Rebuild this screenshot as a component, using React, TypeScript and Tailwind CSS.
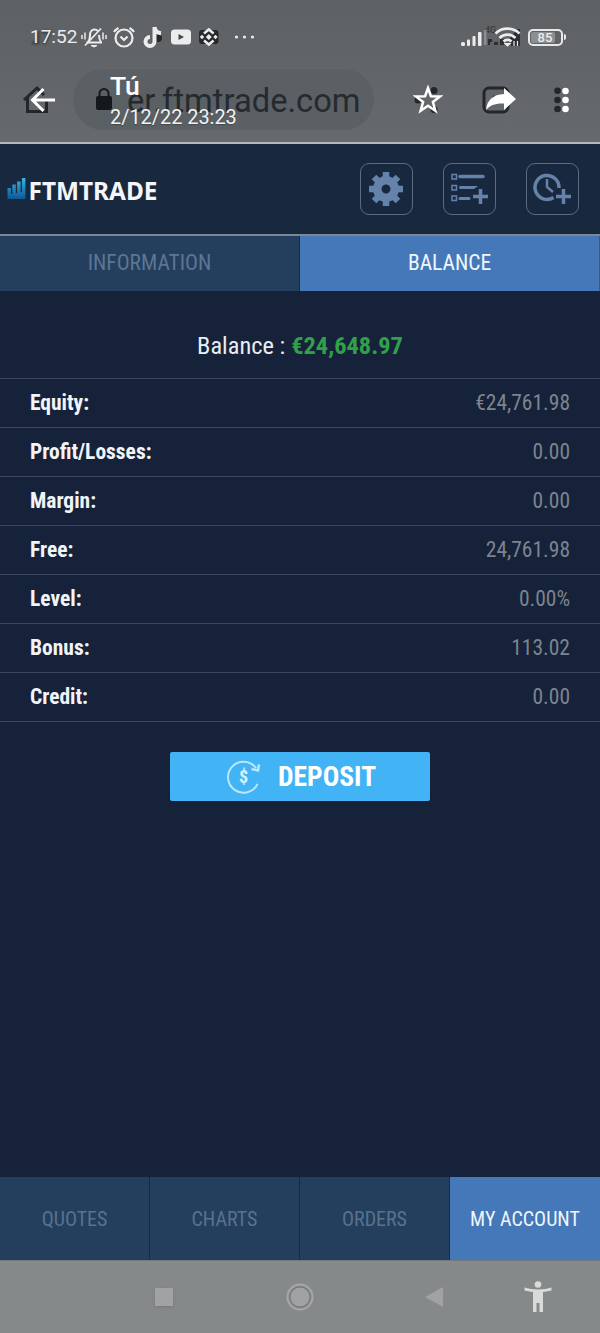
import type { ReactNode } from 'react'

const rows = [
  { label: 'Equity:', value: '€24,761.98' },
  { label: 'Profit/Losses:', value: '0.00' },
  { label: 'Margin:', value: '0.00' },
  { label: 'Free:', value: '24,761.98' },
  { label: 'Level:', value: '0.00%' },
  { label: 'Bonus:', value: '113.02' },
  { label: 'Credit:', value: '0.00' },
]

const bottomTabs = ['QUOTES', 'CHARTS', 'ORDERS', 'MY ACCOUNT']

function StatusBar() {
  return (
    <div className="relative flex h-[74px] items-center pl-[30px] text-[#ececec]">
      {/* Dark status icons of the page underneath */}
      <svg className="absolute left-[30px] top-[29px] blur-[1px]" width="24" height="17" fill="none" stroke="#3c4043" strokeWidth="3">
        <path d="M2 14h6V2M12 3h8l-6 12" />
      </svg>
      <div className="absolute left-[485px] top-[25px] text-[9px] leading-[11px] text-[#303437]">4G</div>
      <svg className="absolute left-[484px] top-[28px]" width="38" height="19" fill="#2b2f32">
        <path d="M0 2h2.500v15H0z" fill="#8b8e90" />
        <path d="M4 11h4v3H6v3H4zM10 14h4v3h-4zM16 11h4v6h-4zM26 9l8-8h2v17h-9z" />
      </svg>

      <div className="relative w-[52px] whitespace-nowrap text-[19px] leading-6">17:52</div>

      {/* Muted, vibrating bell */}
      <svg className="-ml-px" width="26" height="24" viewBox="0 0 26 24" fill="none" stroke="currentColor" strokeWidth="2">
        <path d="M5.500 17.500h15.500M7 17c2-2 2-4 2-7 0-3 1.700-5.500 4.500-5.500 1.500 0 2.500.5 3.300 1.500M18 10c0 3 .4 5 2 7" />
        <path d="M10 20.500h6l-3 1.500z" fill="currentColor" strokeWidth="1" />
        <path d="M4 20.500 20 3.500" strokeWidth="1.800" />
        <path d="M1 10v4M4 7.500v7M22 7.500v7M25 10v4" strokeWidth="1.500" />
      </svg>
      <svg className="ml-[5px]" width="24" height="24" viewBox="0 0 24 24" fill="none" stroke="currentColor" strokeWidth="2.200">
        <circle cx="12" cy="13" r="8.500" />
        <path d="m8.500 11.500 3.500 3.500 3.500-3.500M2 7c1-2 2.500-3 4.500-4M22 7c-1-2-2.500-3-4.500-4" />
      </svg>
      <div className="relative ml-[7px] flex">
        <div className="absolute left-[11px] top-[9px] size-[8px] rounded-sm bg-[#25292c]" />
        <svg className="relative" width="20" height="24" viewBox="0 0 20 24" fill="none">
          <path d="M11.500 2v14.500a4.500 4.500 0 1 1-4.500-4.500M11.500 2c.4 4 2.500 6 6.500 6.200" stroke="currentColor" strokeWidth="4" />
        </svg>
      </div>
      <svg className="ml-[7px]" width="22" height="24" viewBox="0 0 22 24">
        <rect x="1" y="4.500" width="20" height="15" rx="3.500" fill="currentColor" />
        <path d="m8.500 9 5.500 3-5.500 3z" fill="#42474a" />
      </svg>
      <svg className="ml-[6px]" width="22" height="24" viewBox="0 0 22 24">
        <rect x="1" y="5" width="19.500" height="14" rx="3" fill="#25292c" />
        <path d="m6 8.500 4.800-4 4.800 4M6 15.500l4.800 4 4.800-4" fill="none" stroke="currentColor" strokeWidth="2.500" />
        <path d="m10.800 9 3 3-3 3-3-3zM4 9.800 6.200 12 4 14.200 1.800 12zM17.500 9.800l2.200 2.200-2.200 2.200-2.200-2.200z" fill="currentColor" />
      </svg>
      <svg className="ml-[13px]" width="22" height="24" viewBox="0 0 22 24" fill="currentColor">
        <circle cx="3.500" cy="12" r="1.600" />
        <circle cx="11.500" cy="12" r="1.600" />
        <circle cx="19.500" cy="12" r="1.600" />
      </svg>

      <div className="relative ml-auto mr-[34px] flex items-center">
        <svg width="23" height="24" viewBox="0 0 23 24" fill="currentColor">
          <rect x="1" y="17" width="4" height="4" rx="1.500" />
          <rect x="7" y="14.500" width="3" height="6.500" rx="1" />
          <rect x="12.500" y="11" width="3" height="10" rx="1" />
          <rect x="18" y="7" width="3.500" height="14" rx="1" />
        </svg>
        <svg className="ml-[11px]" width="27" height="24" viewBox="0 0 27 24" fill="none" stroke="currentColor" strokeWidth="2.600">
          <path d="M1.500 8.500c6.500-6.500 17.500-6.500 24 0M5.500 13c4.500-4.500 11.500-4.500 16 0M9.500 16.500c2.300-2.300 5.700-2.300 8 0" />
          <path d="m11 18.500 2.500 2.500 2.500-2.500zM20 16v5M23.500 16v5" fill="currentColor" strokeWidth="1.200" />
        </svg>
        <div className="ml-[7px] flex h-[17px] w-[35px] items-center rounded-[5px] border-2 border-[#e8e8e8] p-px">
          <div className="flex h-[11px] w-[24px] items-center justify-center rounded-[2px] bg-[#8c8f91] pl-[4px] text-[13px] font-medium leading-none">85</div>
        </div>
        <div className="ml-px h-[6px] w-[2px] rounded-r bg-[#e8e8e8]" />
      </div>
    </div>
  )
}

function ViewerBar() {
  return (
    <div className="relative flex h-[68px] items-start text-white">
      {/* Browser toolbar showing through */}
      <div className="absolute left-[73px] top-[-5px] h-[61px] w-[301px] rounded-full bg-[#5b6065]" />
      <svg className="absolute left-[22px] top-[10px]" width="30" height="32" viewBox="0 0 30 32" fill="none" stroke="#22272a" strokeWidth="3">
        <path d="M2 16 15 4l7 7M5.500 14v13.500h19V17" />
      </svg>
      <svg className="absolute left-[95px] top-[13px]" width="18" height="25" viewBox="0 0 18 25">
        <rect x="1" y="9" width="16" height="14" rx="2" fill="#14191c" />
        <path d="M4.500 10V6.500a4.500 4.500 0 0 1 9 0V10" fill="none" stroke="#14191c" strokeWidth="2" />
      </svg>
      <div className="absolute left-[127px] top-[7px] whitespace-nowrap text-[32.700px] leading-10 text-[#252a2e]">er.ftmtrade.com</div>
      <svg className="absolute left-[413px] top-[11px]" width="28" height="30" fill="#22272a">
        <circle cx="21" cy="5.500" r="3.500" />
        <circle cx="5" cy="15" r="3.500" />
        <circle cx="21" cy="24.500" r="3.500" />
      </svg>
      <svg className="absolute left-[482px] top-[12px]" width="28" height="28" fill="none" stroke="#22272a" strokeWidth="3">
        <rect x="2" y="2" width="24" height="24" rx="5" />
        <path d="m8 19 5-9" />
      </svg>
      <svg className="absolute left-[553px] top-[13px]" width="9" height="26" fill="#22272a">
        <circle cx="4.500" cy="3.800" r="3.300" />
        <circle cx="4.500" cy="13" r="3.300" />
        <circle cx="4.500" cy="22" r="3.300" />
      </svg>

      <svg className="relative ml-[30px] mt-[13px]" width="26" height="26" viewBox="0 0 26 26" fill="none" stroke="currentColor" strokeWidth="3">
        <path d="M25 13H3M13.500 2 2.500 13l11 11" />
      </svg>
      <div className="relative ml-[54px] whitespace-nowrap">
        <div className="text-[26.500px] font-medium leading-[24px]">Tú</div>
        <div className="mt-[8px] text-[19.900px] leading-6 text-[#f2f2f2] [text-shadow:0_1px_1px_#44484b]">2/12/22 23:23</div>
      </div>
      <div className="relative ml-auto mr-[30px] flex items-center pt-[11px]">
        <svg width="30" height="30" viewBox="0 0 30 30" fill="none" stroke="currentColor" strokeWidth="2.500">
          <path d="m15 3 2.900 8.200 9 .3-7 5.500 2.500 8.800-7.400-5-7.400 5 2.500-8.800-7-5.500 9-.3z" />
        </svg>
        <svg className="ml-[42px]" width="32" height="28" viewBox="0 0 32 28" fill="currentColor">
          <path d="M1 24C2 14 8 8.500 19 8V2l12 11-12 11v-6.500C11 17 5 19 1 24z" />
        </svg>
        <svg className="ml-[44px]" width="9" height="28" viewBox="0 0 9 28" fill="currentColor">
          <circle cx="4.500" cy="5" r="3.300" />
          <circle cx="4.500" cy="14" r="3.300" />
          <circle cx="4.500" cy="23" r="3.300" />
        </svg>
      </div>
    </div>
  )
}

function ToolButton({ children }: { children: ReactNode }) {
  return (
    <button className="flex h-[52px] w-[53px] items-center justify-center rounded-[9px] border border-[#5d6b7e] text-[#6583aa]">
      {children}
    </button>
  )
}

function AppHeader() {
  return (
    <header className="flex h-[90px] items-center bg-[#18283e] pl-[7px] pr-[21px]">
      <svg className="mb-[2px]" width="20" height="24" viewBox="0 0 20 24">
        <defs>
          <linearGradient id="bars" x1="0" y1="0" x2="0" y2="1">
            <stop offset="0" stopColor="#39b4e0" />
            <stop offset="1" stopColor="#0d5799" />
          </linearGradient>
        </defs>
        <path d="M.5 12H4v6h1.300V8.500h3.500V17h1.300V5.500h3.500V16h1.300V2h3.500v21H.5z" fill="url(#bars)" />
      </svg>
      <div className="ml-[1.500px] mt-[3px] w-[130px] whitespace-nowrap font-['Noto_Sans','Open_Sans',sans-serif] text-[24.400px] font-bold leading-6 text-[#f4f6f9]">FTMTRADE</div>
      <div className="ml-auto flex gap-[30px]">
        <ToolButton>
          {/* Eight-tooth cog */}
          <svg className="mt-[-1px] ml-[-1px]" width="36" height="36" viewBox="-18 -18 36 36" fill="none" stroke="currentColor">
            <circle r="8.700" strokeWidth="8.500" />
            <path d="M0-17V-11M0 17V11M-17 0H-11M17 0H11M-12-12l4 4M12 12l-4-4M-12 12l4-4M12-12l-4 4" strokeWidth="6.500" />
          </svg>
        </ToolButton>
        <ToolButton>
          <svg className="mt-[-3px]" width="40" height="36" viewBox="0 0 40 36" fill="none" stroke="currentColor">
            <path d="M2 4.500h4.500v4.500H2zM2 15.500h4.500V20H2zM2 26h4.500v4.500H2z" strokeWidth="1.500" />
            <path d="M10 6.500h23" strokeWidth="3.500" strokeLinecap="round" />
            <path d="M10 16h18l-4 3H10q-2-1.500 0-3z" fill="currentColor" stroke="none" />
            <path d="M10 28.500h9" strokeWidth="3" strokeLinecap="round" />
            <path d="M30.500 19v15M23 26.500h15" strokeWidth="3.500" />
          </svg>
        </ToolButton>
        <ToolButton>
          <svg className="mt-[-3px]" width="40" height="36" viewBox="0 0 40 36" fill="none" stroke="currentColor">
            <path d="M26 18A12 12 0 1 0 20.500 27.500" strokeWidth="3.500" />
            <path d="M14 9v8l6 5" strokeWidth="2.500" />
            <path d="M30.500 19v15M23 26.500h15" strokeWidth="3.500" />
          </svg>
        </ToolButton>
      </div>
    </header>
  )
}

function DepositButton() {
  return (
    <button className="mx-auto mt-[30px] flex h-[49px] w-[260px] items-center rounded-[2px] bg-[#42b4f6] pl-[56px] text-white">
      <svg width="36" height="36" viewBox="0 0 36 36" fill="none" stroke="#bde6fc" strokeWidth="2">
        <path d="M31.500 25A15.500 15.500 0 1 1 30 9" />
        <path d="M33 5.500 32 11.500l-6.500-1.500" strokeWidth="2.500" />
        <text x="17.500" y="24" textAnchor="middle" fontSize="18" fontWeight="800" fontFamily="Roboto, sans-serif" fill="#d5f0ff" stroke="none">$</text>
      </svg>
      <span className="ml-[16px] text-[27.500px] font-bold leading-none">DEPOSIT</span>
    </button>
  )
}

function SystemNav() {
  return (
    <div className="flex h-[73px] items-center border-t border-[#73797d] bg-[#85898a]">
      <div className="ml-[155px] size-[18px] bg-[#a0a2a3] shadow-sm" />
      <svg className="ml-[113px]" width="28" height="28" viewBox="0 0 28 28">
        <circle cx="14" cy="14" r="12.500" fill="none" stroke="#a5a8a9" strokeWidth="2" />
        <circle cx="14" cy="14" r="10" fill="#a0a2a3" stroke="#747879" />
      </svg>
      <svg className="ml-[110px]" width="20" height="22" viewBox="0 0 20 22">
        <path d="M19 1v20L1 11z" fill="#a0a2a3" />
      </svg>
      <svg className="ml-[80px]" width="28" height="34" viewBox="0 0 28 34" fill="#d9dada">
        <circle cx="14" cy="4.500" r="3.300" />
        <path d="M.5 7.500c8 2.500 19 2.500 27 0v3c-3 .8-5 1-8.500 1.500v20h-3.500v-9h-3v9H9V12C5.500 11.500 3.500 11.300.5 10.500z" />
      </svg>
    </div>
  )
}

export default function App() {
  return (
    <div className="flex h-[1333px] w-[600px] flex-col overflow-hidden bg-[#162239] font-['Roboto',sans-serif]">
      <div className="h-[142px] shrink-0 bg-linear-to-b from-[#5d6164] to-[#66696d]">
        <StatusBar />
        <ViewerBar />
      </div>
      <div className="h-[2px] shrink-0 bg-[#b5b9bb]" />
      <AppHeader />

      <div className="flex flex-1 flex-col font-['Roboto_Condensed','Roboto',sans-serif] [font-stretch:75%]">
        <div className="grid h-[57px] grid-cols-2 border-t-2 border-[#7a8799] text-[21.500px]">
          <div className="flex items-center justify-center border-r border-[#17283f] bg-[#243f5d] text-[#5d7594]">INFORMATION</div>
          <div className="flex items-center justify-center border-r border-[#315b8d] bg-[#4478b8] text-[#f0f6fd]">BALANCE</div>
        </div>

        <div className="flex h-[87px] items-center justify-center gap-[6px] pt-[23px] text-[24.400px]">
          <span className="text-[#e9edf3]">Balance :</span>
          <span className="font-bold text-[#30a14a]">€24,648.97</span>
        </div>

        <div className="border-b border-[#3a465b]">
          {rows.map((row) => (
            <div key={row.label} className="flex h-[49px] items-center justify-between border-t border-[#3a465b] px-[30px] text-[21.500px]">
              <span className="font-bold text-[#f1f4f8]">{row.label}</span>
              <span className="text-[#7d8490]">{row.value}</span>
            </div>
          ))}
        </div>

        <DepositButton />

        <nav className="mt-auto grid h-[83px] grid-cols-4 text-[20px]">
          {bottomTabs.map((tab) => (
            <div
              key={tab}
              className={
                tab === 'MY ACCOUNT'
                  ? 'flex items-center justify-center bg-[#4478b8] text-[#f0f6fd]'
                  : 'flex items-center justify-center border-r border-[#142a46] bg-[#243f5d] text-[#58718f]'
              }
            >
              {tab}
            </div>
          ))}
        </nav>
      </div>
      <SystemNav />
    </div>
  )
}
